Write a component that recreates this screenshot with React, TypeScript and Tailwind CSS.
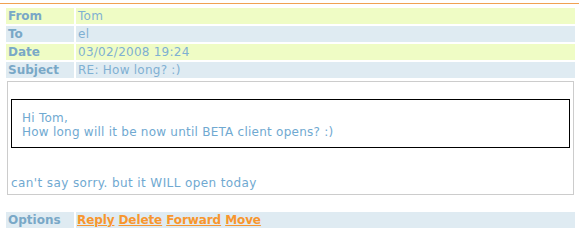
import React from 'react';

const rows = [
  { label: 'From', value: 'Tom', bg: 'bg-[#effcc5]' },
  { label: 'To', value: 'el', bg: 'bg-[#dfebf2]' },
  { label: 'Date', value: '03/02/2008 19:24', bg: 'bg-[#effcc5]' },
  { label: 'Subject', value: 'RE: How long? :)', bg: 'bg-[#dfebf2]' },
];

export default function App() {
  return (
    <div className="w-[579px] h-[244px] bg-white pt-[3px] font-['DejaVu_Sans',sans-serif] text-[12px] leading-[14px]">
      <div className="border-t border-[#f0a152]" />

      {/* Header fields */}
      <div className="grid grid-cols-[68px_1fr] gap-[2px] pl-[6px] pr-[4px] pt-[4px]">
        {rows.map((r) => (
          <React.Fragment key={r.label}>
            <div className={`${r.bg} h-[16px] pl-[2px] font-bold text-[#79a8c7] leading-[16px]`}>{r.label}</div>
            <div className={`${r.bg} h-[16px] pl-[2px] text-[#7fb0d2] leading-[16px] tracking-[0.25px]`}>{r.value}</div>
          </React.Fragment>
        ))}
      </div>

      {/* Message body */}
      <div className="ml-[7px] mr-[5px] mt-[3px] h-[114px] border border-[#cccccc] px-[3px] pt-[17px] text-[#70a9d1] tracking-[0.24px]">
        <div className="border border-black pl-[10px] pt-[11px] pb-[8px]">
          <div>Hi Tom,</div>
          <div>How long will it be now until BETA client opens? :)</div>
        </div>
        <div className="mt-[28px] tracking-[0.4px]">can't say sorry. but it WILL open today</div>
      </div>

      {/* Options */}
      <div className="grid grid-cols-[68px_1fr] gap-[2px] pl-[6px] pr-[4px] mt-[17px]">
        <div className="bg-[#dfebf2] h-[16px] pl-[2px] font-bold text-[#79a8c7] leading-[16px]">Options</div>
        <div className="bg-[#dfebf2] h-[16px] pl-[1px] font-bold text-[#f7962e] leading-[16px] tracking-[-0.1px]">
          <a className="underline">Reply</a> <a className="underline">Delete</a>{' '}
          <a className="underline">Forward</a> <a className="underline">Move</a>
        </div>
      </div>
    </div>
  );
}
